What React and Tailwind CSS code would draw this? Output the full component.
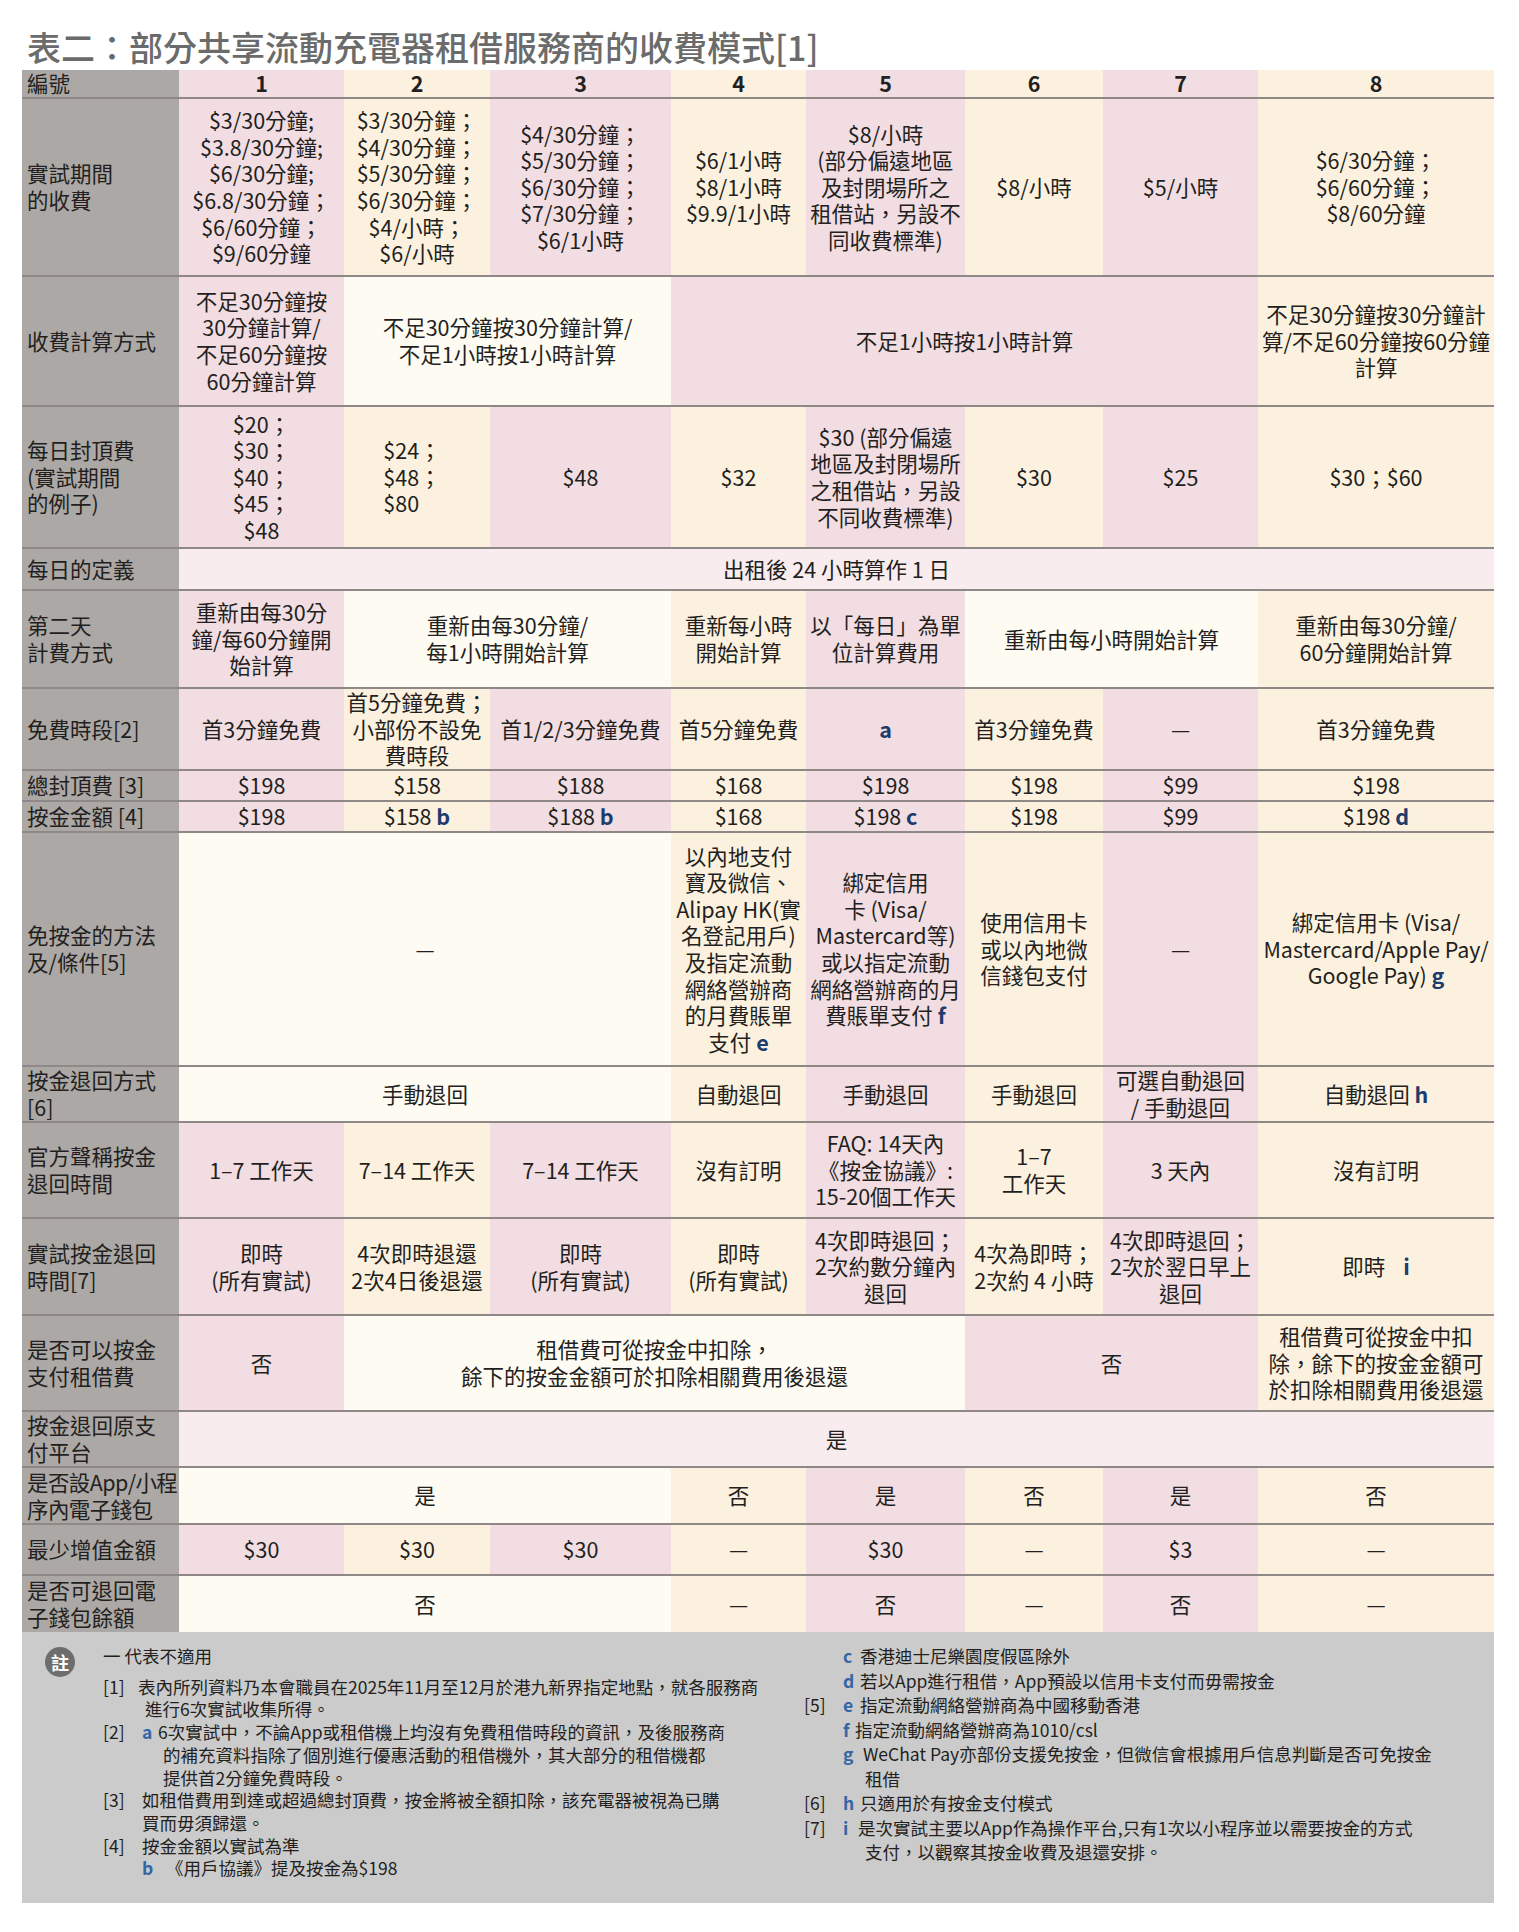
import clsx from 'clsx';

const COLS = 'grid grid-cols-[157px_165px_146px_181px_135px_159px_138px_155px_236px]';
const PINK = 'bg-[#f1dde2]';
const CREAM = 'bg-[#fcf1df]';
const LIGHT = 'bg-[#fefbf3]';
const BLUSH = 'bg-[#f8ecef]';
const SPAN = { 1: '', 2: 'col-span-2', 3: 'col-span-3', 4: 'col-span-4', 8: 'col-span-8' };

function B({ children }) {
  return <span className="font-bold text-[#1d3b6c]">{children}</span>;
}

function Text({ value }) {
  if (typeof value !== 'string') return value;
  const parts = value.split('\n');
  return parts.map((line, i) => (
    <span key={i}>
      {line}
      {i < parts.length - 1 && <br />}
    </span>
  ));
}

const plain = (items) => items.map((c, i) => ({ bg: i % 2 === 0 ? PINK : CREAM, c }));

const rows = [
  {
    h: 'h-[178px]',
    label: '實試期間\n的收費',
    cells: plain([
      '$3/30分鐘;\n$3.8/30分鐘;\n$6/30分鐘;\n$6.8/30分鐘；\n$6/60分鐘；\n$9/60分鐘',
      '$3/30分鐘；\n$4/30分鐘；\n$5/30分鐘；\n$6/30分鐘；\n$4/小時；\n$6/小時',
      '$4/30分鐘；\n$5/30分鐘；\n$6/30分鐘；\n$7/30分鐘；\n$6/1小時',
      '$6/1小時\n$8/1小時\n$9.9/1小時',
      '$8/小時\n(部分偏遠地區\n及封閉場所之\n租借站，另設不\n同收費標準)',
      '$8/小時',
      '$5/小時',
      '$6/30分鐘；\n$6/60分鐘；\n$8/60分鐘',
    ]),
  },
  {
    h: 'h-[130px]',
    label: '收費計算方式',
    cells: [
      { bg: PINK, c: '不足30分鐘按\n30分鐘計算/\n不足60分鐘按\n60分鐘計算' },
      { bg: LIGHT, span: 2, c: '不足30分鐘按30分鐘計算/\n不足1小時按1小時計算' },
      { bg: PINK, span: 4, c: '不足1小時按1小時計算' },
      { bg: CREAM, c: '不足30分鐘按30分鐘計\n算/不足60分鐘按60分鐘\n計算' },
    ],
  },
  {
    h: 'h-[142px]',
    label: '每日封頂費\n(實試期間\n的例子)',
    cells: plain([
      '$20；\n$30；\n$40；\n$45；\n$48',
      <div className="text-left pr-[10px]">
        $24；<br />$48；<br />$80
      </div>,
      '$48',
      '$32',
      '$30 (部分偏遠\n地區及封閉場所\n之租借站，另設\n不同收費標準)',
      '$30',
      '$25',
      '$30；$60',
    ]),
  },
  {
    h: 'h-[42px]',
    label: '每日的定義',
    cells: [{ bg: BLUSH, span: 8, c: '出租後 24 小時算作 1 日' }],
  },
  {
    h: 'h-[98px]',
    label: '第二天\n計費方式',
    cells: [
      { bg: PINK, c: '重新由每30分\n鐘/每60分鐘開\n始計算' },
      { bg: LIGHT, span: 2, c: '重新由每30分鐘/\n每1小時開始計算' },
      { bg: CREAM, c: '重新每小時\n開始計算' },
      { bg: PINK, c: '以「每日」為單\n位計算費用' },
      { bg: LIGHT, span: 2, c: '重新由每小時開始計算' },
      { bg: CREAM, c: '重新由每30分鐘/\n60分鐘開始計算' },
    ],
  },
  {
    h: 'h-[82px]',
    label: '免費時段[2]',
    cells: plain([
      '首3分鐘免費',
      '首5分鐘免費；\n小部份不設免\n費時段',
      '首1/2/3分鐘免費',
      '首5分鐘免費',
      <B>a</B>,
      '首3分鐘免費',
      '—',
      '首3分鐘免費',
    ]),
  },
  {
    h: 'h-[31px]',
    label: '總封頂費 [3]',
    cells: plain(['$198', '$158', '$188', '$168', '$198', '$198', '$99', '$198']),
  },
  {
    h: 'h-[31px]',
    label: '按金金額 [4]',
    cells: plain([
      '$198',
      <>$158 <B>b</B></>,
      <>$188 <B>b</B></>,
      '$168',
      <>$198 <B>c</B></>,
      '$198',
      '$99',
      <>$198 <B>d</B></>,
    ]),
  },
  {
    h: 'h-[234px]',
    label: '免按金的方法\n及/條件[5]',
    cells: [
      { bg: LIGHT, span: 3, c: '—' },
      {
        bg: CREAM,
        c: (
          <div>
            以內地支付<br />寶及微信、<br />Alipay HK(實<br />名登記用戶)<br />及指定流動<br />網絡營辦商<br />的月費賬單<br />支付 <B>e</B>
          </div>
        ),
      },
      {
        bg: PINK,
        c: (
          <div>
            綁定信用<br />卡 (Visa/<br />Mastercard等)<br />或以指定流動<br />網絡營辦商的月<br />費賬單支付 <B>f</B>
          </div>
        ),
      },
      { bg: CREAM, c: '使用信用卡\n或以內地微\n信錢包支付' },
      { bg: PINK, c: '—' },
      {
        bg: CREAM,
        c: (
          <div>
            綁定信用卡 (Visa/<br />Mastercard/Apple Pay/<br />Google Pay) <B>g</B>
          </div>
        ),
      },
    ],
  },
  {
    h: 'h-[56px]',
    label: '按金退回方式\n[6]',
    cells: [
      { bg: LIGHT, span: 3, c: '手動退回' },
      { bg: CREAM, c: '自動退回' },
      { bg: PINK, c: '手動退回' },
      { bg: CREAM, c: '手動退回' },
      { bg: PINK, c: '可選自動退回\n/ 手動退回' },
      { bg: CREAM, c: <>自動退回 <B>h</B></> },
    ],
  },
  {
    h: 'h-[96px]',
    label: '官方聲稱按金\n退回時間',
    cells: plain([
      '1–7 工作天',
      '7–14 工作天',
      '7–14 工作天',
      '沒有訂明',
      'FAQ: 14天內\n《按金協議》:\n15-20個工作天',
      '1–7\n工作天',
      '3 天內',
      '沒有訂明',
    ]),
  },
  {
    h: 'h-[97px]',
    label: '實試按金退回\n時間[7]',
    cells: plain([
      '即時\n(所有實試)',
      '4次即時退還\n2次4日後退還',
      '即時\n(所有實試)',
      '即時\n(所有實試)',
      '4次即時退回；\n2次約數分鐘內\n退回',
      '4次為即時；\n2次約 4 小時',
      '4次即時退回；\n2次於翌日早上\n退回',
      <>即時<span className="ml-[18px]"><B>i</B></span></>,
    ]),
  },
  {
    h: 'h-[96px]',
    label: '是否可以按金\n支付租借費',
    cells: [
      { bg: PINK, c: '否' },
      { bg: LIGHT, span: 4, c: '租借費可從按金中扣除，\n餘下的按金金額可於扣除相關費用後退還' },
      { bg: PINK, span: 2, c: '否' },
      { bg: CREAM, c: '租借費可從按金中扣\n除，餘下的按金金額可\n於扣除相關費用後退還' },
    ],
  },
  {
    h: 'h-[56px]',
    label: '按金退回原支\n付平台',
    cells: [{ bg: BLUSH, span: 8, c: '是' }],
  },
  {
    h: 'h-[57px]',
    label: '是否設App/小程\n序內電子錢包',
    labelClass: 'tracking-[-0.6px]',
    cells: [
      { bg: LIGHT, span: 3, c: '是' },
      { bg: CREAM, c: '否' },
      { bg: PINK, c: '是' },
      { bg: CREAM, c: '否' },
      { bg: PINK, c: '是' },
      { bg: CREAM, c: '否' },
    ],
  },
  {
    h: 'h-[51px]',
    label: '最少增值金額',
    cells: plain(['$30', '$30', '$30', '—', '$30', '—', '$3', '—']),
  },
  {
    h: 'h-[56px]',
    label: '是否可退回電\n子錢包餘額',
    last: true,
    cells: [
      { bg: LIGHT, span: 3, c: '否' },
      { bg: CREAM, c: '—' },
      { bg: PINK, c: '否' },
      { bg: CREAM, c: '—' },
      { bg: PINK, c: '否' },
      { bg: CREAM, c: '—' },
    ],
  },
];

function Row({ row }) {
  return (
    <div className={clsx(COLS, row.h, !row.last && 'border-b-2 border-[#8e8987]')}>
      <div className={clsx('flex items-center bg-[#aca8a5] pl-[5px] whitespace-nowrap', row.labelClass)}>
        <div>
          <Text value={row.label} />
        </div>
      </div>
      {row.cells.map((cell, i) => (
        <div
          key={i}
          className={clsx(
            'flex items-center justify-center text-center whitespace-nowrap',
            SPAN[cell.span || 1],
            cell.bg
          )}
        >
          <div>
            <Text value={cell.c} />
          </div>
        </div>
      ))}
    </div>
  );
}

function Letter({ children }) {
  return <span className="inline-block w-[17px] font-bold text-[#3466a5]">{children}</span>;
}

function Notes() {
  return (
    <div className="flex h-[271px] bg-[#cbcbcb] text-[17.5px] text-[#231f20]">
      <div className="w-[81px] pl-[23px] pt-[15px]">
        <div className="flex h-[30px] w-[30px] items-center justify-center rounded-full bg-[#6d6d6d] text-[18px] font-bold text-white">
          註
        </div>
      </div>

      <div className="w-[701px] whitespace-nowrap pt-[13px] leading-[22.7px]">
        <p className="mb-[8px]">一 代表不適用</p>
        <div className="flex">
          <span className="w-[35px]">[1]</span>
          <div>
            表內所列資料乃本會職員在2025年11月至12月於港九新界指定地點，就各服務商
            <br />
            <span className="pl-[7px]">進行6次實試收集所得。</span>
          </div>
        </div>
        <div className="flex">
          <span className="w-[39px]">[2]</span>
          <Letter>a</Letter>
          <div>
            <span className="-ml-[1px]">6次實試中，不論App或租借機上均沒有免費租借時段的資訊，及後服務商</span>
            <br />
            <span className="pl-[4px]">的補充資料指除了個別進行優惠活動的租借機外，其大部分的租借機都</span>
            <br />
            <span className="pl-[4px]">提供首2分鐘免費時段。</span>
          </div>
        </div>
        <div className="flex">
          <span className="w-[39px]">[3]</span>
          <div>
            如租借費用到達或超過總封頂費，按金將被全額扣除，該充電器被視為已購
            <br />
            買而毋須歸還。
          </div>
        </div>
        <div className="flex">
          <span className="w-[39px]">[4]</span>
          <div>
            按金金額以實試為準
            <br />
            <Letter>b</Letter>
            <span className="pl-[7px]">《用戶協議》提及按金為$198</span>
          </div>
        </div>
      </div>

      <div className="whitespace-nowrap pt-[12px] leading-[24.5px]">
        <div className="flex">
          <span className="w-[39px]" />
          <Letter>c</Letter>
          <span>香港迪士尼樂園度假區除外</span>
        </div>
        <div className="flex">
          <span className="w-[39px]" />
          <Letter>d</Letter>
          <span>若以App進行租借，App預設以信用卡支付而毋需按金</span>
        </div>
        <div className="flex">
          <span className="w-[39px]">[5]</span>
          <Letter>e</Letter>
          <span>指定流動網絡營辦商為中國移動香港</span>
        </div>
        <div className="flex">
          <span className="w-[39px]" />
          <span className="inline-block w-[12px] font-bold text-[#3466a5]">f</span>
          <span>指定流動網絡營辦商為1010/csl</span>
        </div>
        <div className="flex">
          <span className="w-[39px]" />
          <Letter>g</Letter>
          <div>
            <span className="pl-[3px]">WeChat Pay亦部份支援免按金，但微信會根據用戶信息判斷是否可免按金</span>
            <br />
            <span className="pl-[5px]">租借</span>
          </div>
        </div>
        <div className="flex">
          <span className="w-[39px]">[6]</span>
          <Letter>h</Letter>
          <span>只適用於有按金支付模式</span>
        </div>
        <div className="flex">
          <span className="w-[39px]">[7]</span>
          <span className="inline-block w-[15px] font-bold text-[#3466a5]">i</span>
          <div>
            是次實試主要以App作為操作平台,只有1次以小程序並以需要按金的方式
            <br />
            <span className="pl-[7px]">支付，以觀察其按金收費及退還安排。</span>
          </div>
        </div>
      </div>
    </div>
  );
}

export default function App() {
  return (
    <div className="min-h-[1932px] w-[1519px] bg-white font-['Noto_Sans_CJK_TC','Noto_Sans',sans-serif] text-[#231f20]">
      <h1 className="h-[70px] pl-[27px] pt-[28px] text-[34px] font-medium leading-[38px] text-[#6b6b6b]">
        表二：部分共享流動充電器租借服務商的收費模式[1]
      </h1>

      <div className="ml-[22px] w-[1472px]">
        <section className="text-[21.5px] leading-[26.6px]">
          <div className={clsx(COLS, 'h-[29px] border-b-2 border-[#8e8987]')}>
            <div className="flex items-center bg-[#aca8a5] pl-[5px]">編號</div>
            {[1, 2, 3, 4, 5, 6, 7, 8].map((n, i) => (
              <div
                key={n}
                className={clsx('flex items-center justify-center font-bold', i % 2 === 0 ? PINK : CREAM)}
              >
                {n}
              </div>
            ))}
          </div>
          {rows.map((row, i) => (
            <Row key={i} row={row} />
          ))}
        </section>

        <Notes />
      </div>
    </div>
  );
}
